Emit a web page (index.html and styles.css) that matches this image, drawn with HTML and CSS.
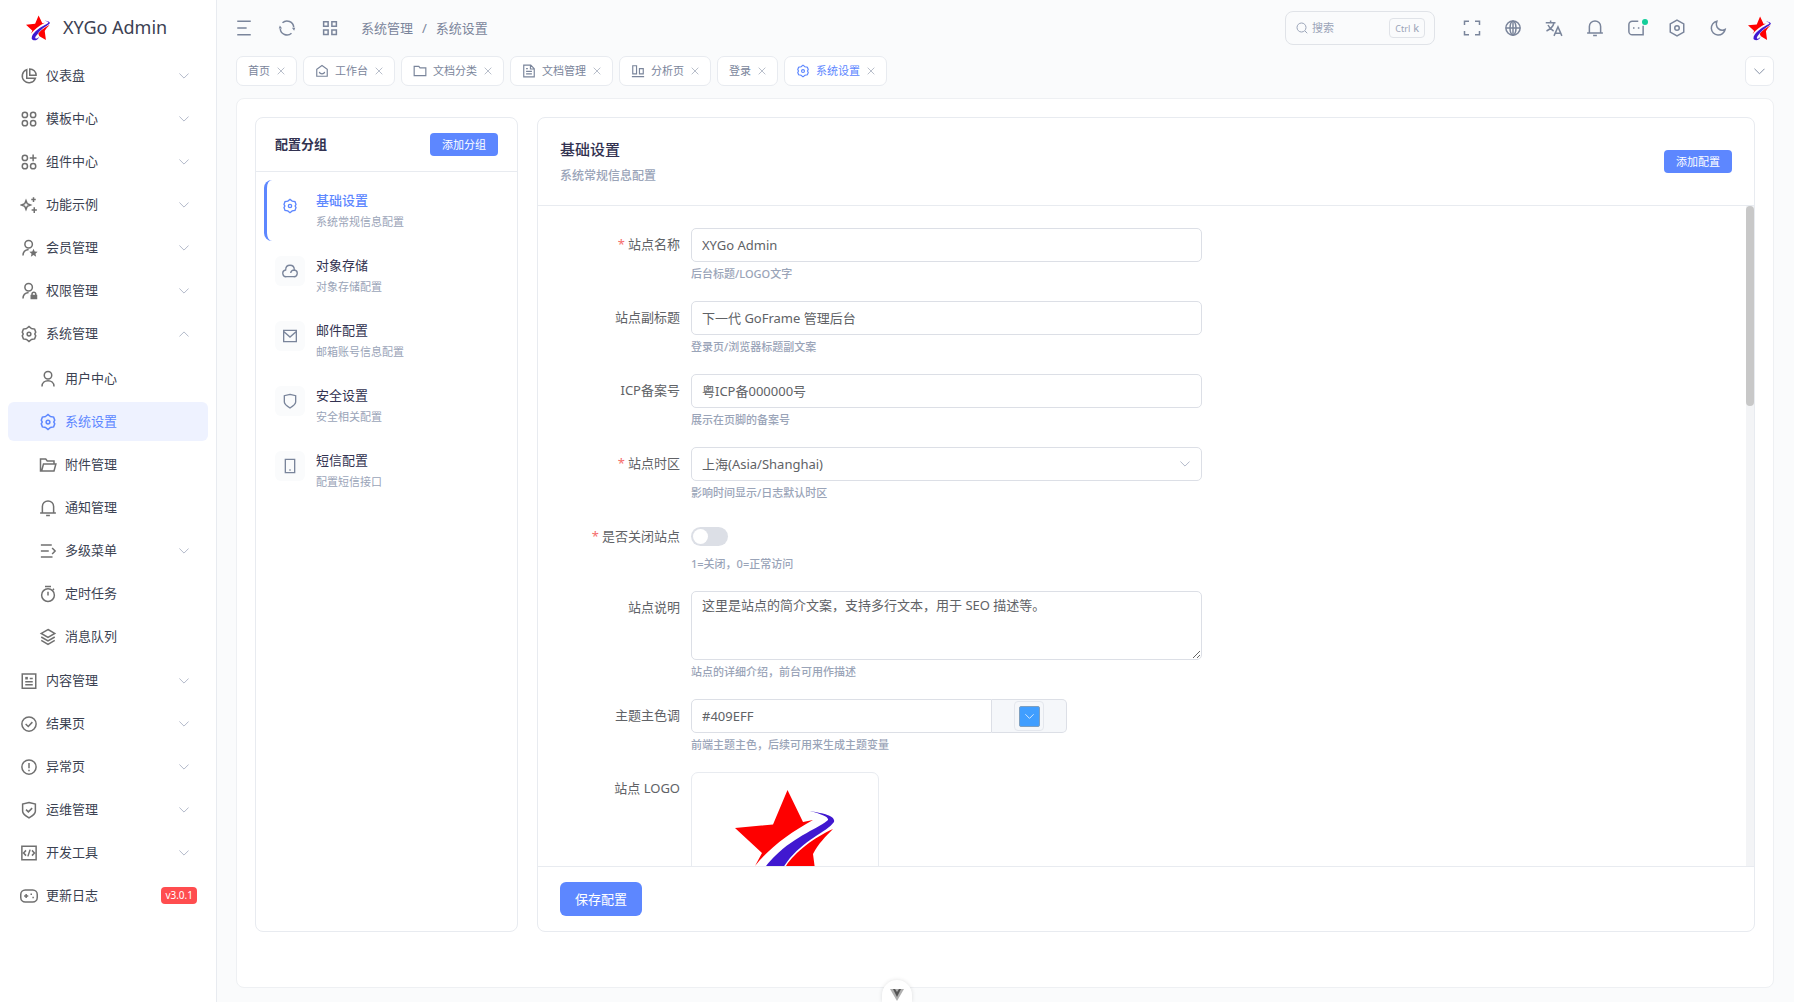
FILE: index.html
```html
<!DOCTYPE html>
<html lang="zh-CN">
<head>
<meta charset="utf-8">
<meta name="viewport" content="width=device-width, initial-scale=1">
<title>系统设置 - XYGo Admin</title>
<link rel="stylesheet" href="styles.css">
</head>
<body>
<svg class="sprite" aria-hidden="true">
  <symbol id="logo" viewBox="0 0 100 104">
    <path fill="#fe0000" d="M52.500 0L68 32L78 30C56 42 34 58 20 76L27 63L0 38L38 34.500Z"/>
    <path fill="#fe0000" d="M98 39C80 47 60 62 51 76L56 86L83 102L78 64C84 53 90 47 98 39Z"/>
    <path fill="#4018d0" d="M75 21C85 23 101 25 99 32C92 42 68 50 52 72C44 84 36 90 39 95C42 98 49 95 54 88C52 104 28 108 24 97C22 85 32 74 40 66C60 46 86 37 93 30C94 27 86 24 75 21Z"/>
  </symbol>
  <symbol id="i-pie" viewBox="0 0 24 24"><path d="M9 3.500A9 9 0 1 0 20.500 15H9Z"/><path d="M13 2.500A8.500 8.500 0 0 1 21.500 11H13Z"/></symbol>
  <symbol id="i-apps" viewBox="0 0 24 24"><circle cx="6.500" cy="6.500" r="3.500"/><circle cx="17.500" cy="6.500" r="3.500"/><circle cx="6.500" cy="17.500" r="3.500"/><circle cx="17.500" cy="17.500" r="3.500"/></symbol>
  <symbol id="i-appsadd" viewBox="0 0 24 24"><circle cx="6.500" cy="6.500" r="3.500"/><path d="M17.500 2V11M13 6.500H22"/><circle cx="6.500" cy="17.500" r="3.500"/><circle cx="17.500" cy="17.500" r="3.500"/></symbol>
  <symbol id="i-spark" viewBox="0 0 24 24"><path d="M8 6L9.700 10.300L14 12L9.700 13.700L8 18L6.300 13.700L2 12L6.300 10.300Z"/><path d="M18 1.500V8M15 4.700H21M19 15V22.500M15.500 18.700H22.500"/></symbol>
  <symbol id="i-userstar" viewBox="0 0 24 24"><circle cx="11.500" cy="7" r="5"/><path d="M4 22C4 17.500 7 14.500 11.500 14"/><path class="solid" d="M18 13L19.600 16.700L23.500 17L20.600 19.600L21.500 23.500L18 21.400L14.500 23.500L15.400 19.600L12.500 17L16.400 16.700Z"/></symbol>
  <symbol id="i-userlock" viewBox="0 0 24 24"><circle cx="11.500" cy="7" r="5"/><path d="M4 22C4 17.500 7 14.500 11.500 14"/><path class="solid" d="M14 17H23V23H14Z"/><path d="M16 17.500V16A2.200 2.200 0 0 1 21 16V17.500"/></symbol>
  <symbol id="i-gear" viewBox="0 0 24 24"><path d="M8.700 4.700L12 2L15.300 4.700L19.500 5.500L21 9.500L19.700 12L21 14.500L19.500 18.500L15.300 19.300L12 22L8.700 19.300L4.500 18.500L3 14.500L4.300 12L3 9.500L4.500 5.500Z"/><circle cx="12" cy="12" r="2.500"/></symbol>
  <symbol id="i-user" viewBox="0 0 24 24"><circle cx="12" cy="7" r="5"/><path d="M4 22C4 11.700 20 11.700 20 22"/></symbol>
  <symbol id="i-folderopen" viewBox="0 0 24 24"><path d="M3.500 20L6 10.500H22.500L20 20H2V4H9L11 6.500H20V10"/></symbol>
  <symbol id="i-folder" viewBox="0 0 24 24"><path d="M2 4H10L12 6.500H22V20H2Z"/></symbol>
  <symbol id="i-bell" viewBox="0 0 24 24"><path d="M4.500 18V10A7.500 7.500 0 0 1 19.500 10V18M1.500 18.500H22.500M9.500 22H14.500"/></symbol>
  <symbol id="i-indent" viewBox="0 0 24 24"><path d="M2.500 4H17M2.500 12H13M2.500 20H18M17.500 8L21.500 12L17.500 16"/></symbol>
  <symbol id="i-timer" viewBox="0 0 24 24"><circle cx="12" cy="13.500" r="8.500"/><path d="M12 9V14M8 2H16M18.500 6.500L20 5"/></symbol>
  <symbol id="i-stack" viewBox="0 0 24 24"><path d="M12 2L21 7.300L12 12.500L3 7.300ZM3 12L12 17.300L21 12M3 16.500L12 21.800L21 16.500"/></symbol>
  <symbol id="i-article" viewBox="0 0 24 24"><path d="M3 2.500H21V21.500H3ZM7 13H17M7 17H17M13 8.500H17"/><path class="solid" d="M7 6.500H10.500V10H7Z"/></symbol>
  <symbol id="i-check" viewBox="0 0 24 24"><circle cx="12" cy="12" r="9.500"/><path d="M7.500 12L11 15.300L16.500 9.500"/></symbol>
  <symbol id="i-alert" viewBox="0 0 24 24"><circle cx="12" cy="12" r="9.500"/><path d="M12 6.500V13.500M12 15.500V17.500"/></symbol>
  <symbol id="i-shieldcheck" viewBox="0 0 24 24"><path d="M12 2L20.500 4V13.500C20.500 17 18 18.700 12 22.500C6 18.700 3.500 17 3.500 13.500V4ZM8 11.500L11.200 14.500L16.200 9.500"/></symbol>
  <symbol id="i-code" viewBox="0 0 24 24"><path d="M2.500 3H21.500V21H2.500ZM8 8.500L4.800 12L8 15.500M16 8.500L19.200 12L16 15.500M13.500 7.500L10.500 16.500"/></symbol>
  <symbol id="i-game" viewBox="0 0 24 24"><rect x="1" y="4" width="22" height="16" rx="6"/><path d="M5.500 12H11M8.200 9.300V14.700M14 9.500H16M16.500 14H18.500"/></symbol>
  <symbol id="i-down" viewBox="0 0 24 24"><path d="M1 6L12 17L23 6"/></symbol>
  <symbol id="i-up" viewBox="0 0 24 24"><path d="M1 18L12 7L23 18"/></symbol>
  <symbol id="i-close" viewBox="0 0 24 24"><path d="M2 2L22 22M22 2L2 22"/></symbol>
  <symbol id="i-fold" viewBox="0 0 24 24"><path d="M3 3H21M3 12H15.500M3 21H21"/></symbol>
  <symbol id="i-refresh" viewBox="0 0 24 24"><path d="M3 13A9 9 0 0 0 18 19M21 11A9 9 0 0 0 6 5"/><path class="solid" d="M18.500 11.500H23L21.500 15.500ZM5.500 12.500H1L2.500 8.500Z"/></symbol>
  <symbol id="i-grid" viewBox="0 0 24 24"><path d="M3.500 3.500H9.500V9.500H3.500ZM14.500 3.500H20.500V9.500H14.500ZM3.500 14.500H9.500V20.500H3.500ZM14.500 14.500H20.500V20.500H14.500Z"/></symbol>
  <symbol id="i-home" viewBox="0 0 24 24"><path d="M12 2.500L21 9V21H3V9ZM7.500 13.500C8 18 16 18 16.500 13.500"/></symbol>
  <symbol id="i-doc" viewBox="0 0 24 24"><path d="M3 2H15L21 8V22H3ZM14.500 2.500V8.500H20.500M7 8H10M7 12.500H17M7 17H17"/></symbol>
  <symbol id="i-chart" viewBox="0 0 24 24"><path d="M3 3H9.500V17H3ZM14.500 8H21V17H14.500ZM1.500 21.500H22.500"/></symbol>
  <symbol id="i-search" viewBox="0 0 24 24"><circle cx="11" cy="11" r="9"/><path d="M18 18L22.500 22.500"/></symbol>
  <symbol id="i-full" viewBox="0 0 24 24"><path d="M2 8V3H8M16 3H22V8M22 16V21H16M8 21H2V16"/></symbol>
  <symbol id="i-globe" viewBox="0 0 24 24"><circle cx="12" cy="12" r="9.500"/><ellipse cx="12" cy="12" rx="4" ry="9.500"/><path d="M2.500 12H21.500M12 2.500V21.500"/></symbol>
  <symbol id="i-lang" viewBox="0 0 24 24"><path d="M1 5H14M7.500 2V5M12 5C11 10 6 14 2 16M4 8C5.500 11.500 8 14 11.500 16M12 22.500L17.300 10.500L22.500 22.500M13.500 19H21"/></symbol>
  <symbol id="i-chat" viewBox="0 0 24 24"><path d="M15 3H7A4.500 4.500 0 0 0 2.500 7.500V16.500A4.500 4.500 0 0 0 7 21H21.500V9M8 12H10M14.500 12H16.500"/></symbol>
  <symbol id="i-hex" viewBox="0 0 24 24"><path d="M12 1.500L21 6.500V17.500L12 22.500L3 17.500V6.500Z"/><circle cx="12" cy="12" r="3"/></symbol>
  <symbol id="i-moon" viewBox="0 0 24 24"><path d="M10.500 3A9.300 9.300 0 1 0 21.500 14C15 17.500 7.500 11 10.500 3Z"/></symbol>
  <symbol id="i-cloud" viewBox="0 0 24 24"><path d="M7 20.500A5 5 0 0 1 5.500 10.500C5.500 1 18.500 1 18.500 10.500A5 5 0 0 1 17 20.500ZM18.500 10.500C15.500 10.500 13.500 12 13 15"/></symbol>
  <symbol id="i-mail" viewBox="0 0 24 24"><path d="M2.500 3.500H21.500V20.500H2.500ZM3 5.500L12 13.500L21 5.500"/></symbol>
  <symbol id="i-shield" viewBox="0 0 24 24"><path d="M12 2L20.500 4V13.500C20.500 17 18 18.700 12 22.500C6 18.700 3.500 17 3.500 13.500V4Z"/></symbol>
  <symbol id="i-phone" viewBox="0 0 24 24"><path d="M5 2H19V22H5ZM11 18H13"/></symbol>
</svg>

<div class="app">
  <aside class="sidebar">
    <a class="brand" href="#"><svg class="brand-logo"><use href="#logo"/></svg><span>XYGo Admin</span></a>
    <nav class="menu">
      <a class="item" href="#"><svg class="icon"><use href="#i-pie"/></svg><span>仪表盘</span><svg class="chev"><use href="#i-down"/></svg></a>
      <a class="item" href="#"><svg class="icon"><use href="#i-apps"/></svg><span>模板中心</span><svg class="chev"><use href="#i-down"/></svg></a>
      <a class="item" href="#"><svg class="icon"><use href="#i-appsadd"/></svg><span>组件中心</span><svg class="chev"><use href="#i-down"/></svg></a>
      <a class="item" href="#"><svg class="icon"><use href="#i-spark"/></svg><span>功能示例</span><svg class="chev"><use href="#i-down"/></svg></a>
      <a class="item" href="#"><svg class="icon"><use href="#i-userstar"/></svg><span>会员管理</span><svg class="chev"><use href="#i-down"/></svg></a>
      <a class="item" href="#"><svg class="icon"><use href="#i-userlock"/></svg><span>权限管理</span><svg class="chev"><use href="#i-down"/></svg></a>
      <a class="item" href="#"><svg class="icon"><use href="#i-gear"/></svg><span>系统管理</span><svg class="chev"><use href="#i-up"/></svg></a>
      <div class="submenu">
        <a class="item" href="#"><svg class="icon"><use href="#i-user"/></svg><span>用户中心</span></a>
        <a class="item active" href="#"><svg class="icon"><use href="#i-gear"/></svg><span>系统设置</span></a>
        <a class="item" href="#"><svg class="icon"><use href="#i-folderopen"/></svg><span>附件管理</span></a>
        <a class="item" href="#"><svg class="icon"><use href="#i-bell"/></svg><span>通知管理</span></a>
        <a class="item" href="#"><svg class="icon"><use href="#i-indent"/></svg><span>多级菜单</span><svg class="chev"><use href="#i-down"/></svg></a>
        <a class="item" href="#"><svg class="icon"><use href="#i-timer"/></svg><span>定时任务</span></a>
        <a class="item" href="#"><svg class="icon"><use href="#i-stack"/></svg><span>消息队列</span></a>
      </div>
      <a class="item" href="#"><svg class="icon"><use href="#i-article"/></svg><span>内容管理</span><svg class="chev"><use href="#i-down"/></svg></a>
      <a class="item" href="#"><svg class="icon"><use href="#i-check"/></svg><span>结果页</span><svg class="chev"><use href="#i-down"/></svg></a>
      <a class="item" href="#"><svg class="icon"><use href="#i-alert"/></svg><span>异常页</span><svg class="chev"><use href="#i-down"/></svg></a>
      <a class="item" href="#"><svg class="icon"><use href="#i-shieldcheck"/></svg><span>运维管理</span><svg class="chev"><use href="#i-down"/></svg></a>
      <a class="item" href="#"><svg class="icon"><use href="#i-code"/></svg><span>开发工具</span><svg class="chev"><use href="#i-down"/></svg></a>
      <a class="item" href="#"><svg class="icon"><use href="#i-game"/></svg><span>更新日志</span><em class="version">v3.0.1</em></a>
    </nav>
  </aside>

  <div class="main">
    <header class="topbar">
      <div class="tools">
        <button class="tool" type="button" aria-label="折叠菜单"><svg class="icon"><use href="#i-fold"/></svg></button>
        <button class="tool" type="button" aria-label="刷新"><svg class="icon"><use href="#i-refresh"/></svg></button>
        <button class="tool" type="button" aria-label="快速入口"><svg class="icon"><use href="#i-grid"/></svg></button>
      </div>
      <nav class="crumbs"><a href="#">系统管理</a><span>/</span><a href="#">系统设置</a></nav>
      <label class="search"><svg class="icon"><use href="#i-search"/></svg><input type="search" placeholder="搜索" aria-label="搜索"><kbd><span>Ctrl</span> k</kbd></label>
      <div class="tools">
        <button class="tool" type="button" aria-label="全屏"><svg class="icon"><use href="#i-full"/></svg></button>
        <button class="tool" type="button" aria-label="站点"><svg class="icon"><use href="#i-globe"/></svg></button>
        <button class="tool" type="button" aria-label="语言"><svg class="icon"><use href="#i-lang"/></svg></button>
        <button class="tool" type="button" aria-label="通知"><svg class="icon"><use href="#i-bell"/></svg></button>
        <button class="tool has-dot" type="button" aria-label="消息"><svg class="icon"><use href="#i-chat"/></svg></button>
        <button class="tool" type="button" aria-label="设置"><svg class="icon"><use href="#i-hex"/></svg></button>
        <button class="tool" type="button" aria-label="深色模式"><svg class="icon"><use href="#i-moon"/></svg></button>
        <button class="tool" type="button" aria-label="用户"><svg class="avatar"><use href="#logo"/></svg></button>
      </div>
    </header>

    <div class="tabbar">
      <div class="tab"><a href="#">首页</a><button type="button" aria-label="关闭"><svg><use href="#i-close"/></svg></button></div>
      <div class="tab"><a href="#"><svg class="icon"><use href="#i-home"/></svg>工作台</a><button type="button" aria-label="关闭"><svg><use href="#i-close"/></svg></button></div>
      <div class="tab"><a href="#"><svg class="icon"><use href="#i-folder"/></svg>文档分类</a><button type="button" aria-label="关闭"><svg><use href="#i-close"/></svg></button></div>
      <div class="tab"><a href="#"><svg class="icon"><use href="#i-doc"/></svg>文档管理</a><button type="button" aria-label="关闭"><svg><use href="#i-close"/></svg></button></div>
      <div class="tab"><a href="#"><svg class="icon"><use href="#i-chart"/></svg>分析页</a><button type="button" aria-label="关闭"><svg><use href="#i-close"/></svg></button></div>
      <div class="tab"><a href="#">登录</a><button type="button" aria-label="关闭"><svg><use href="#i-close"/></svg></button></div>
      <div class="tab current"><a href="#"><svg class="icon"><use href="#i-gear"/></svg>系统设置</a><button type="button" aria-label="关闭"><svg><use href="#i-close"/></svg></button></div>
      <button class="tab-more" type="button" aria-label="更多"><svg><use href="#i-down"/></svg></button>
    </div>

    <main class="content">
      <section class="card groups">
        <header class="groups-head"><h2>配置分组</h2><button class="btn small" type="button">添加分组</button></header>
        <div class="group-list">
          <a class="group active" href="#"><span class="tile"><svg class="icon"><use href="#i-gear"/></svg></span><span><strong>基础设置</strong><small>系统常规信息配置</small></span></a>
          <a class="group" href="#"><span class="tile"><svg class="icon"><use href="#i-cloud"/></svg></span><span><strong>对象存储</strong><small>对象存储配置</small></span></a>
          <a class="group" href="#"><span class="tile"><svg class="icon"><use href="#i-mail"/></svg></span><span><strong>邮件配置</strong><small>邮箱账号信息配置</small></span></a>
          <a class="group" href="#"><span class="tile"><svg class="icon"><use href="#i-shield"/></svg></span><span><strong>安全设置</strong><small>安全相关配置</small></span></a>
          <a class="group" href="#"><span class="tile"><svg class="icon"><use href="#i-phone"/></svg></span><span><strong>短信配置</strong><small>配置短信接口</small></span></a>
        </div>
      </section>

      <section class="card panel">
        <header class="panel-head">
          <div><h1>基础设置</h1><p>系统常规信息配置</p></div>
          <button class="btn small" type="button">添加配置</button>
        </header>
        <div class="panel-body">
          <form class="form" id="config">
            <div class="row"><label class="required" for="name">站点名称</label><div class="field"><input class="text" id="name" value="XYGo Admin"><p class="hint">后台标题/LOGO文字</p></div></div>
            <div class="row"><label for="subtitle">站点副标题</label><div class="field"><input class="text" id="subtitle" value="下一代 GoFrame 管理后台"><p class="hint">登录页/浏览器标题副文案</p></div></div>
            <div class="row"><label for="icp">ICP备案号</label><div class="field"><input class="text" id="icp" value="粤ICP备000000号"><p class="hint">展示在页脚的备案号</p></div></div>
            <div class="row"><label class="required" for="zone">站点时区</label><div class="field"><div class="select"><select class="text" id="zone"><option>上海(Asia/Shanghai)</option></select><svg class="chev"><use href="#i-down"/></svg></div><p class="hint">影响时间显示/日志默认时区</p></div></div>
            <div class="row"><label class="required" for="closed">是否关闭站点</label><div class="field"><div class="switch-line"><input class="switch" type="checkbox" id="closed"></div><p class="hint">1=关闭，0=正常访问</p></div></div>
            <div class="row"><label for="about">站点说明</label><div class="field"><textarea class="text area" id="about">这里是站点的简介文案，支持多行文本，用于 SEO 描述等。</textarea><p class="hint">站点的详细介绍，前台可用作描述</p></div></div>
            <div class="row"><label for="color">主题主色调</label><div class="field"><div class="color"><input class="text" id="color" value="#409EFF"><div class="addon"><button class="picker" type="button" aria-label="选择颜色"><span><svg><use href="#i-down"/></svg></span></button></div></div><p class="hint">前端主题主色，后续可用来生成主题变量</p></div></div>
            <div class="row"><label for="upload">站点 LOGO</label><div class="field"><button class="upload" id="upload" type="button"><svg><use href="#logo"/></svg></button></div></div>
          </form>
          <div class="scroll"><div class="thumb"></div></div>
        </div>
        <footer class="panel-foot"><button class="btn" type="submit" form="config">保存配置</button></footer>
      </section>
    </main>
  </div>
</div>
<button class="devtools" type="button" aria-label="开发者面板"><svg viewBox="0 0 14 12"><path fill="#b0b0b0" d="M0 0H14L7 12Z"/><path fill="#555" d="M3 0H5L7 3L9 0H11L7 8Z"/></svg></button>
</body>
</html>
```
FILE: styles.css
```css
:root {
  --blue: #5d87ff;
  --line: #e8ebf0;
  --muted: #9aa4b8;
  --gray: #7a859b;
}
* { box-sizing: border-box; }
body {
  margin: 0;
  background: #fafbfc;
  color: #323251;
  font: 13px/20px "Noto Sans", "Noto Sans CJK SC", sans-serif;
}
a { color: inherit; text-decoration: none; }
button, input, select, textarea { font: inherit; color: inherit; margin: 0; }
button { background: none; border: 0; padding: 0; cursor: pointer; }
h1, h2, p { margin: 0; font-weight: 500; }
.sprite { display: none; }
svg { display: block; flex: none; fill: none; stroke: currentColor; stroke-width: 2; }
svg .solid { fill: currentColor; stroke: none; }
svg [fill] { stroke: none; }
.icon { width: 18px; height: 18px; }
.chev { width: 10px; height: 10px; color: #a3acbf; }

.app { display: flex; height: 100vh; }

/* sidebar */
.sidebar { flex: none; width: 217px; background: #fff; border-right: 1px solid var(--line); overflow: hidden; }
.brand { display: flex; align-items: center; gap: 13px; height: 56px; padding-left: 26px; font-size: 18px; line-height: 24px; color: #3c4153; }
.brand span { padding-bottom: 2px; }
.brand-logo { width: 24px; height: 26px; stroke: none; }
.menu { padding: 0 8px; }
.item { display: flex; align-items: center; gap: 8px; height: 39px; margin-bottom: 4px; padding: 0 19px 0 12px; border-radius: 6px; color: #3b4252; }
.item span { padding-bottom: 1px; }
.item .icon { color: #707070; }
.item .chev, .item .version { margin-left: auto; }
.submenu { padding: 2px 0 1px; }
.submenu .item { padding-left: 31px; }
.item.active { background: #eef2ff; color: var(--blue); }
.item.active .icon { color: var(--blue); }
.version { margin-right: -8px; padding: 0 4px; border-radius: 4px; background: #ff4d4f; color: #fff; font-size: 10px; line-height: 17px; font-style: normal; }

/* top bar */
.main { flex: 1; min-width: 0; display: flex; flex-direction: column; padding: 0 20px 14px 19px; }
.topbar { display: flex; align-items: center; height: 56px; color: var(--gray); }
.tools { display: flex; gap: 9px; }
.crumbs { display: flex; gap: 9px; margin: 0 auto 0 15px; }
.tools:first-child { margin-left: -8px; gap: 11px; }
.tools:last-child { margin: 0 -1px 0 21px; }
.tool { position: relative; display: grid; place-items: center; width: 32px; height: 32px; color: var(--gray); }
.avatar { width: 23px; height: 25px; stroke: none; }
.has-dot::after { content: ""; position: absolute; top: 7px; right: 4px; width: 6px; height: 6px; border-radius: 50%; background: #13ce9a; }
.search { display: flex; align-items: center; gap: 4px; width: 150px; height: 34px; padding: 0 9px 0 10px; border: 1px solid #e0e3e8; border-radius: 8px; color: var(--muted); font-size: 11px; }
.search .icon { width: 12px; height: 12px; }
.search input { flex: 1; min-width: 0; padding: 0; border: 0; outline: 0; background: none; }
.search input::placeholder { color: var(--muted); opacity: 1; }
kbd { padding: 0 5px; border: 1px solid #e0e3e8; border-radius: 4px; font: 11px/17px "Noto Sans", sans-serif; white-space: nowrap; }
kbd span { font-size: 9px; }

/* tabs */
.tabbar { display: flex; gap: 6px; height: 42px; align-items: flex-start; font-size: 11px; color: var(--gray); }
.tab { display: flex; align-items: center; gap: 7px; height: 30px; padding: 0 11px; background: #fff; border: 1px solid var(--line); border-radius: 7px; }
.tab a { display: flex; align-items: center; gap: 6px; }
.tab .icon { width: 14px; height: 14px; }
.tab button svg { width: 8px; height: 8px; color: #959fb1; }
.tab.current a { color: var(--blue); }
.tab-more { display: grid; place-items: center; width: 29px; height: 30px; margin-left: auto; background: #fff; border: 1px solid var(--line); border-radius: 7px; }
.tab-more svg { width: 11px; height: 11px; }

/* content */
.content { flex: 1; min-height: 0; display: flex; gap: 19px; padding: 18px 18px 55px; background: #fff; border: 1px solid #eef0f3; border-radius: 8px; }
.card { border: 1px solid var(--line); border-radius: 8px; }
.btn { height: 34px; padding: 0 15px; border-radius: 6px; background: var(--blue); color: #fff; }
.btn.small { height: 23px; padding: 0 12px; border-radius: 4px; font-size: 11px; line-height: 20px; }
.groups { flex: none; width: 263px; }
.groups-head { display: flex; align-items: center; justify-content: space-between; height: 54px; padding: 0 19px; border-bottom: 1px solid var(--line); }
.groups-head h2 { padding-bottom: 1px; font-size: 13px; font-weight: 600; }
.group-list { display: grid; gap: 4px; padding: 8px; }
.group { display: flex; gap: 11px; height: 61px; padding: 11px 8px; border-left: 3px solid transparent; border-radius: 8px; }
.group.active { border-left-color: var(--blue); }
.tile { flex: none; display: grid; place-items: center; width: 30px; height: 30px; background: #fafbfc; border-radius: 6px; color: var(--gray); }
.tile .icon { width: 16px; height: 16px; }
.group strong { display: block; font-weight: 400; line-height: 18px; }
.group small { display: block; margin-top: 4px; font-size: 11px; line-height: 17px; color: var(--muted); }
.group.active strong, .group.active .tile { color: var(--blue); }
.group.active strong { font-weight: 500; }
.group.active .tile { background: none; }

.panel { flex: 1; min-width: 0; display: flex; flex-direction: column; }
.panel-head { display: flex; align-items: center; justify-content: space-between; height: 88px; padding: 0 22px; border-bottom: 1px solid var(--line); }
.panel-head h1 { font-size: 15px; line-height: 24px; font-weight: 500; }
.panel-head p { margin-top: 6px; padding-bottom: 2px; font-size: 12px; line-height: 18px; color: var(--muted); }
.panel-body { flex: 1; min-height: 0; overflow: hidden; display: flex; }
.form { flex: 1; overflow: hidden; padding: 22px; }
.scroll { width: 8px; background: #f3f4f6; }
.thumb { height: 200px; border-radius: 4px; background: #c8c8c8; }
.panel-foot { height: 65px; padding: 15px 22px; border-top: 1px solid var(--line); }

/* form */
.row { display: flex; margin-bottom: 18px; color: #606266; }
.row label { flex: none; width: 131px; padding-right: 11px; text-align: right; line-height: 33px; }
.required::before { content: "*"; margin-right: 3px; color: #f56c6c; }
.field { flex: 1; max-width: 511px; }
.hint { margin-top: 3px; padding-bottom: 1px; font-size: 11px; line-height: 17px; color: var(--muted); }
.text { display: block; width: 100%; height: 34px; padding: 0 10px 1px; border: 1px solid #dcdfe6; border-radius: 5px; outline: 0; background: #fff; }
.area { height: 69px; padding: 3px 10px; line-height: 20px; resize: vertical; }
.select { display: grid; align-items: center; }
.select > * { grid-area: 1 / 1; }
.select select { appearance: none; }
.select .chev { justify-self: end; margin-right: 12px; }
.switch-line { display: flex; align-items: center; height: 32px; }
.switch { appearance: none; width: 37px; height: 19px; padding: 2px; border-radius: 10px; background: #dcdfe6; }
.switch::before { content: ""; display: block; width: 15px; height: 15px; border-radius: 50%; background: #fff; }
.switch:checked::before { margin-left: auto; }
.color { display: flex; width: 376px; }
.color .text { flex: 1; min-width: 0; border-radius: 5px 0 0 5px; }
.addon { display: grid; place-items: center; width: 75px; background: #f5f7fa; border: 1px solid #dcdfe6; border-left: 0; border-radius: 0 5px 5px 0; }
.picker { display: grid; place-items: center; width: 30px; height: 30px; border: 1px solid #e4e7ed; border-radius: 4px; }
.picker span { display: grid; place-items: center; width: 21px; height: 21px; border: 1px solid #7d9fc0; border-radius: 2px; background: #409eff; color: #fff; }
.picker svg { width: 9px; height: 9px; }
.upload { display: grid; justify-content: center; width: 188px; height: 188px; padding-top: 17px; border: 1px solid #e8ebf0; border-radius: 7px; }
.upload svg { width: 100px; height: 104px; }

/* floating developer toggle */
.devtools { position: fixed; bottom: 0; left: 50%; width: 30px; height: 22px; margin-left: -15px; padding-top: 8px; border-radius: 15px 15px 0 0; background: #fff; box-shadow: 0 0 4px rgba(0, 0, 0, .12); }
.devtools svg { width: 14px; height: 12px; margin: 0 auto; }
```
